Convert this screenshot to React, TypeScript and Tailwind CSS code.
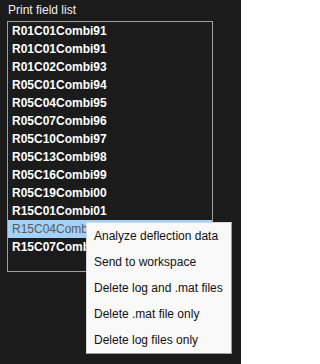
import React from "react";

const fields = [
  "R01C01Combi91",
  "R01C01Combi91",
  "R01C02Combi93",
  "R05C01Combi94",
  "R05C04Combi95",
  "R05C07Combi96",
  "R05C10Combi97",
  "R05C13Combi98",
  "R05C16Combi99",
  "R05C19Combi00",
  "R15C01Combi01",
  "R15C04Combi02",
  "R15C07Combi03",
];

const menuItems = [
  "Analyze deflection data",
  "Send to workspace",
  "Delete log and .mat files",
  "Delete .mat file only",
  "Delete log files only",
];

const selected = 11;

export default function App() {
  return (
    <div
      className="relative w-[241px] h-[364px] overflow-hidden bg-[#1b1b1b] text-[12px]"
      style={{ fontFamily: '"Liberation Sans", Arial, sans-serif' }}
    >
      <div className="h-[21px] pt-[3px] pl-[8px] leading-[14px] text-[#f0f0f0]">Print field list</div>
      <div className="ml-[7px] w-[206px] h-[251px] border border-[#a0a0a0] overflow-hidden">
        {fields.map((name, i) =>
          i === selected ? (
            <div key={i} className="h-[18px] leading-[18px] pl-[4px] bg-[#a3d1f7] text-[#5a5a5a]">
              {name}
            </div>
          ) : (
            <div key={i} className="h-[18px] leading-[18px] pl-[4px] font-bold text-white">
              {name}
            </div>
          )
        )}
      </div>

      {/* context menu */}
      <div className="absolute left-[86px] top-[222px] w-[146px] h-[132px] bg-[#f9f9f9] border border-[#d8d8d8] border-r-[#a0a0a0] border-b-[#a0a0a0]">
        {menuItems.map((item) => (
          <div key={item} className="h-[26px] leading-[26px] pl-[7px] text-[#111] whitespace-nowrap">
            {item}
          </div>
        ))}
      </div>
    </div>
  );
}
